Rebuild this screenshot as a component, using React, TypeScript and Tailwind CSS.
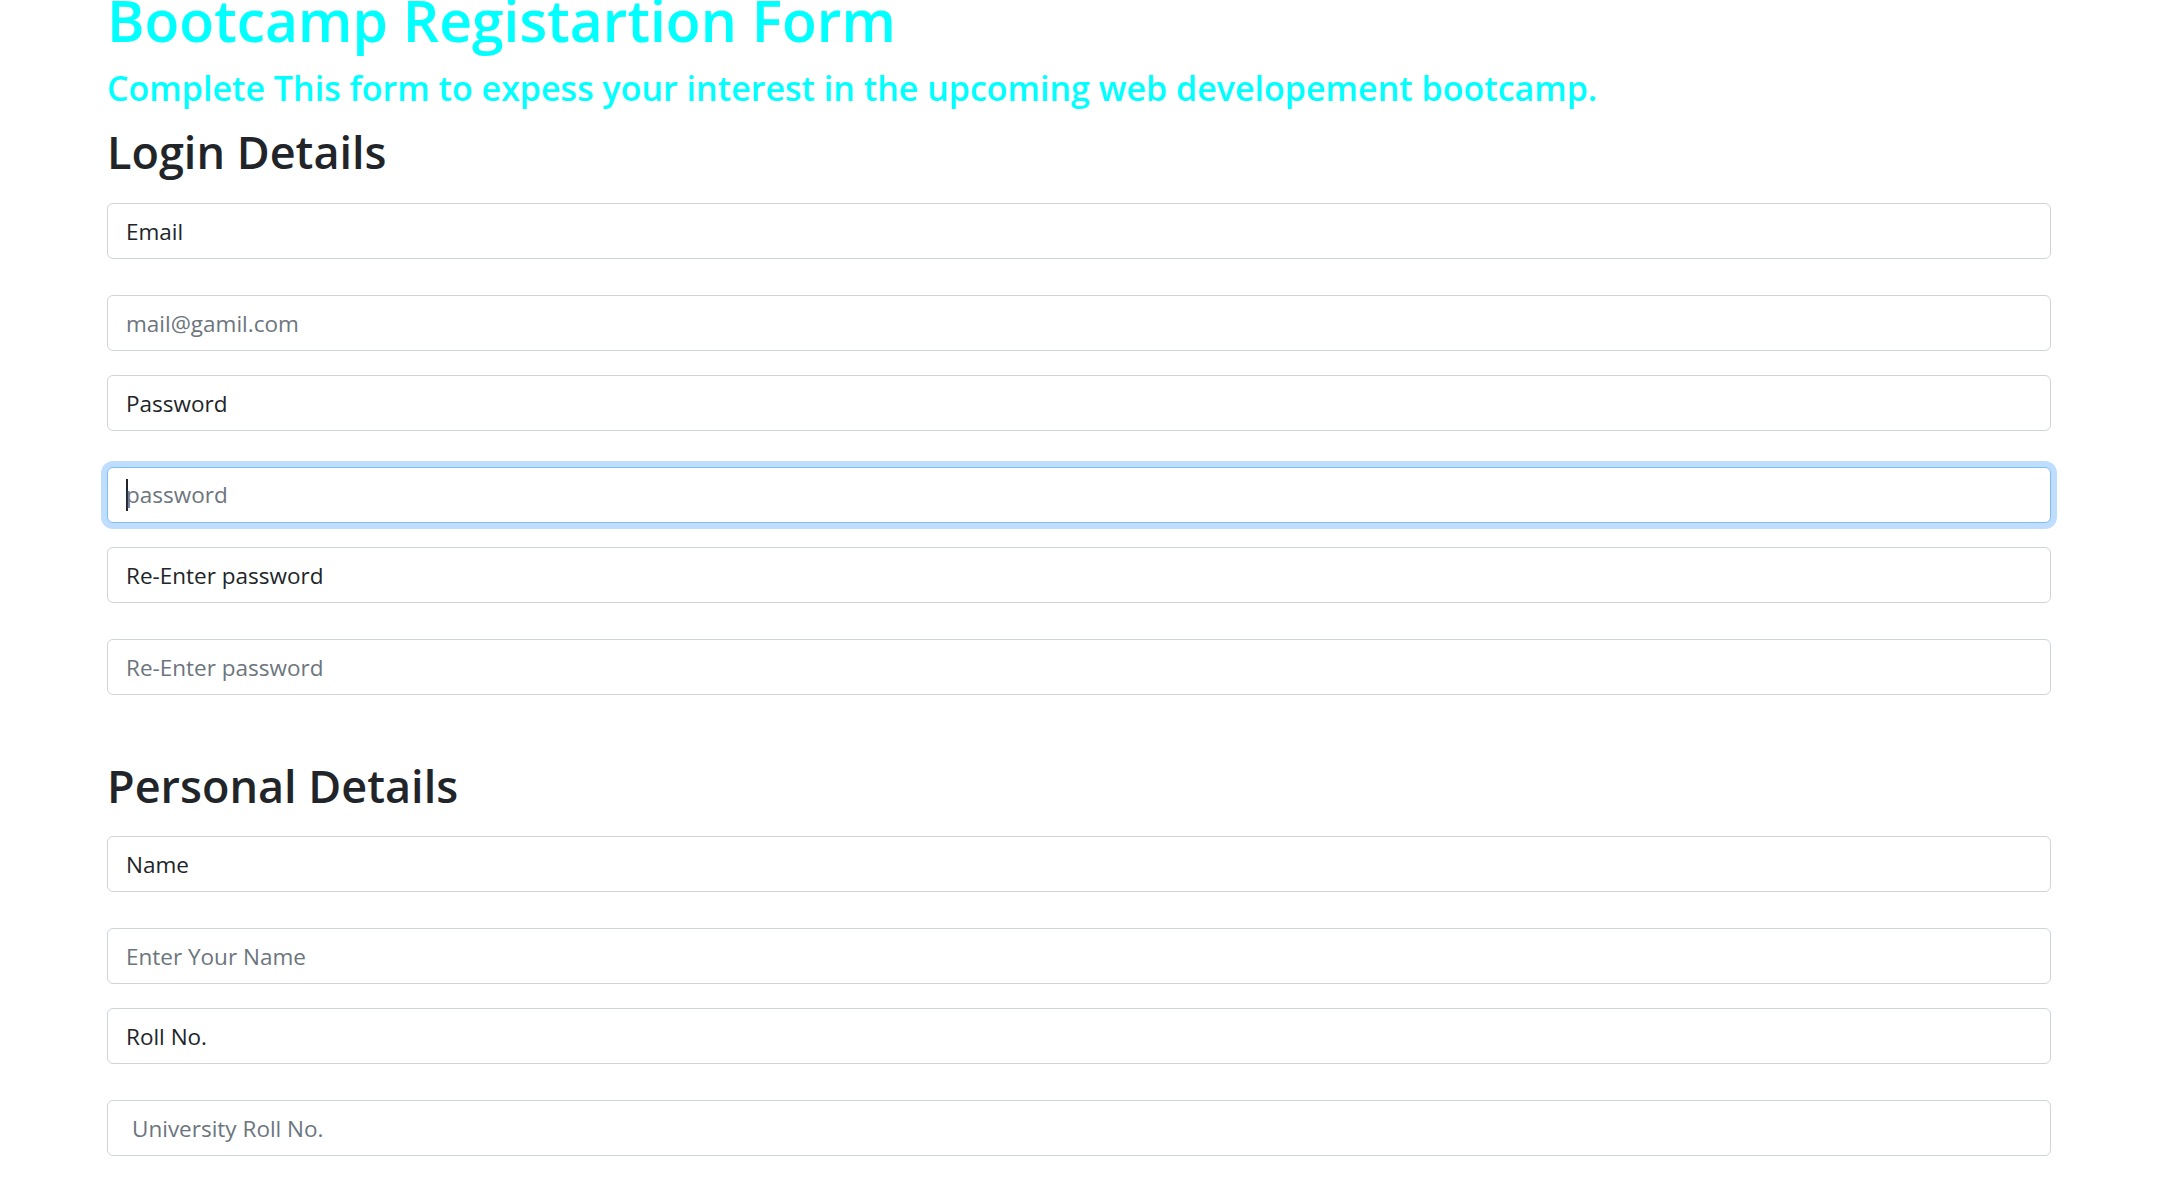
const font = { fontFamily: '"Open Sans", "Noto Sans", sans-serif' };

function LabelBox({ text }: { text: string }) {
  return (
    <input
      readOnly
      value={text}
      className="block w-full h-[56px] px-[18px] border border-[#ced4da] rounded-[6px] bg-white text-[22.5px] text-[#212529] outline-none"
    />
  );
}

function InputBox({ placeholder, extraPad }: { placeholder: string; extraPad?: boolean }) {
  return (
    <input
      placeholder={placeholder}
      className={`block w-full h-[56px] ${extraPad ? "pl-[24px]" : "pl-[18px]"} pr-[18px] border border-[#ced4da] rounded-[6px] bg-white text-[22.5px] text-[#495057] placeholder:text-[#6c757d] outline-none`}
    />
  );
}

function FocusedBox({ placeholder }: { placeholder: string }) {
  return (
    <div className="flex items-center w-full h-[56px] px-[18px] border border-[#80bdff] rounded-[6px] bg-white shadow-[0_0_0_6px_#bfdeff]">
      <span className="w-[2px] h-[32px] bg-[#212529]" />
      <span className="text-[22.5px] text-[#6c757d] -ml-[2px]">{placeholder}</span>
    </div>
  );
}

function Pair({ label, placeholder, focused, extraPad }: { label: string; placeholder: string; focused?: boolean; extraPad?: boolean }) {
  return (
    <div className="flex flex-col gap-[36px] mb-[24px]">
      <LabelBox text={label} />
      {focused ? <FocusedBox placeholder={placeholder} /> : <InputBox placeholder={placeholder} extraPad={extraPad} />}
    </div>
  );
}

export default function App() {
  return (
    <div className="min-h-screen bg-white overflow-hidden" style={font}>
      <div className="ml-[107px] mr-[129px] -mt-[8px]">
        <h1 className="text-[57px] leading-none font-semibold text-[#00ffff]">Bootcamp Registartion Form</h1>
        <h4 className="mt-[22px] text-[34px] leading-none font-semibold text-[#00ffff]">
          Complete This form to expess your interest in the upcoming web developement bootcamp.
        </h4>
        <h2 className="mt-[24px] mb-[29px] text-[45px] leading-none font-semibold text-[#212529]">Login Details</h2>
        <form>
          <Pair label="Email" placeholder="mail@gamil.com" />
          <Pair label="Password" placeholder="password" focused />
          <Pair label="Re-Enter password" placeholder="Re-Enter password" />
          <h2 className="mt-[68px] mb-[28px] text-[45px] leading-none font-semibold text-[#212529]">Personal Details</h2>
          <Pair label="Name" placeholder="Enter Your Name" />
          <Pair label="Roll No." placeholder="University Roll No." extraPad />
        </form>
      </div>
    </div>
  );
}
